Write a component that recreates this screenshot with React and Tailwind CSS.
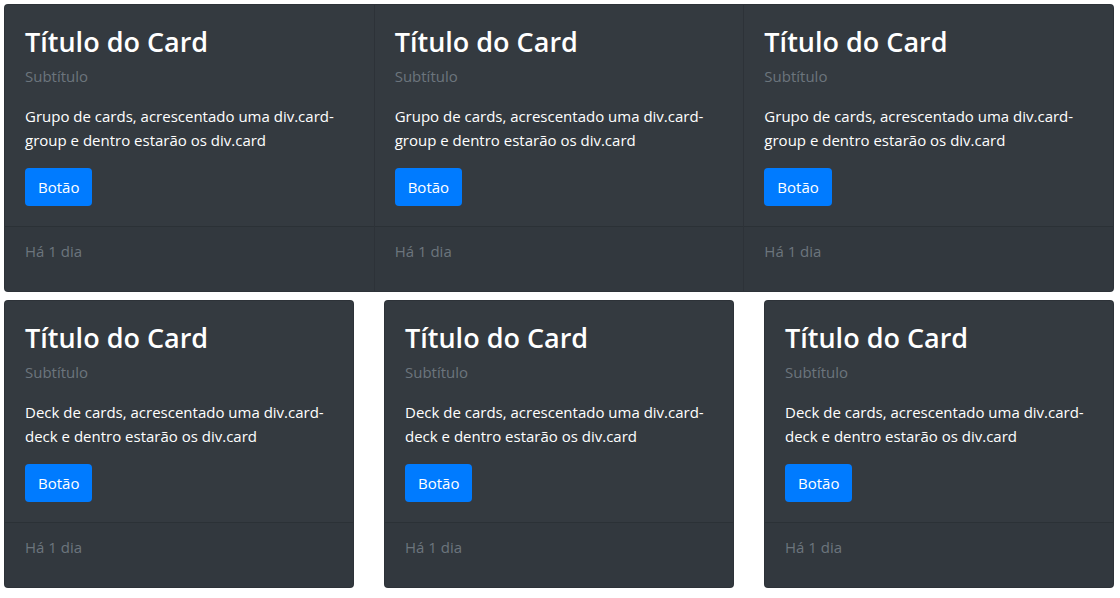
const cards = [1, 2, 3];

const CardContent = ({ text }) => (
  <>
    <div className="flex-1 p-5">
      <h3 className="text-[27px] leading-[33px] font-semibold text-white mb-3">Título do Card</h3>
      <p className="text-[15px] leading-6 text-[#6c757d] -mt-1.5 mb-4">Subtítulo</p>
      <p className="text-[15px] leading-6 text-white mb-4">{text}</p>
      <button className="h-[38px] px-[13px] rounded bg-[#007bff] text-white text-[15px] leading-6">Botão</button>
    </div>
    <div className="px-5 py-3 border-t border-black/[0.125] bg-black/[0.03]">
      <p className="text-[15px] leading-6 text-[#6c757d] mb-4">Há 1 dia</p>
    </div>
  </>
);

export default function App() {
  return (
    <div className="w-[1110px] ml-1 pt-1 font-['Open_Sans',sans-serif]">
      <div className="flex">
        {cards.map((n, i) => (
          <div
            key={n}
            className={`flex-1 flex flex-col bg-[#343a40] border border-black/[0.125] ${i > 0 ? "border-l-0" : "rounded-l"} ${i === 2 ? "rounded-r" : ""}`}
          >
            <CardContent text="Grupo de cards, acrescentado uma div.card-group e dentro estarão os div.card" />
          </div>
        ))}
      </div>
      <div className="flex gap-[30px] mt-2">
        {cards.map((n) => (
          <div key={n} className="flex-1 flex flex-col bg-[#343a40] border border-black/[0.125] rounded">
            <CardContent text="Deck de cards, acrescentado uma div.card-deck e dentro estarão os div.card" />
          </div>
        ))}
      </div>
    </div>
  );
}
